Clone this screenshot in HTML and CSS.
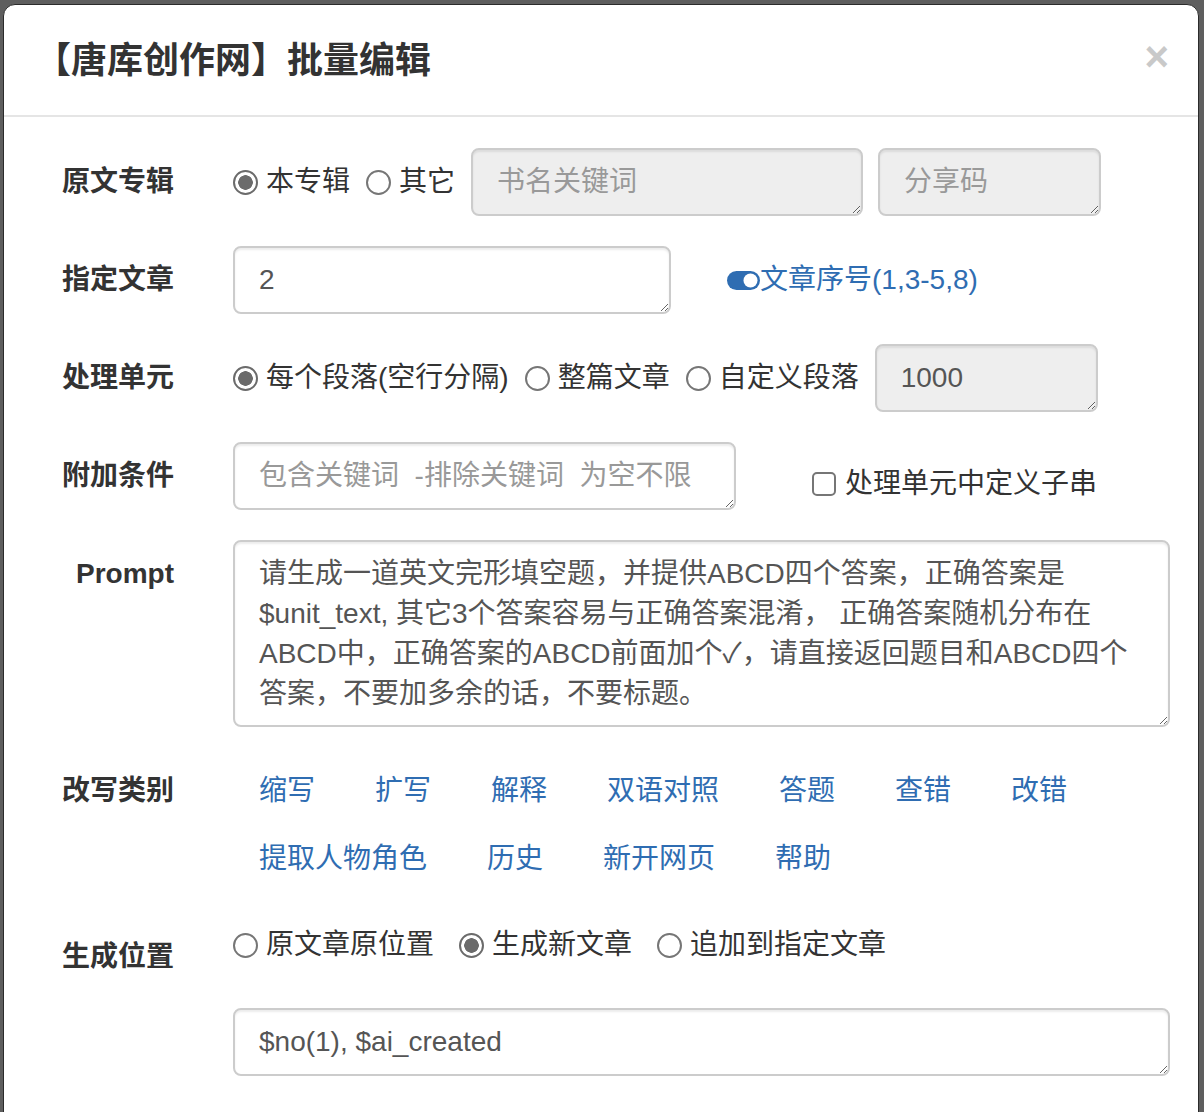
FILE: index.html
```html
<!DOCTYPE html>
<html lang="zh-CN">
<head>
    <meta charset="UTF-8">
    <title>批量编辑</title>
    <link rel="stylesheet" href="styles.css">
</head>
<body>
    <div class="modal">
        <div class="modal-header">
            <h4 class="modal-title">【唐库创作网】批量编辑</h4>
            <button class="close">×</button>
        </div>

        <div class="modal-body">
            <div class="form-row">
                <label class="row-label">原文专辑</label>
                <div class="row-controls">
                    <label class="radio"><input type="radio" name="src" checked>本专辑</label>
                    <label class="radio"><input type="radio" name="src">其它</label>
                    <textarea class="field field-grey book-field" placeholder="书名关键词" readonly></textarea>
                    <textarea class="field field-grey code-field" placeholder="分享码" readonly></textarea>
                </div>
            </div>

            <div class="form-row">
                <label class="row-label">指定文章</label>
                <div class="row-controls">
                    <textarea class="field article-field">2</textarea>
                    <a class="toggle-link" href="#">
                        <svg width="33" height="19" viewBox="0 0 33 19"><rect x="0" y="0" width="33" height="19" rx="9.5" fill="#2f6db2"/><circle cx="23.5" cy="9.5" r="7" fill="#fff"/></svg>文章序号(1,3-5,8)
                    </a>
                </div>
            </div>

            <div class="form-row">
                <label class="row-label">处理单元</label>
                <div class="row-controls">
                    <label class="radio"><input type="radio" name="unit" checked>每个段落(空行分隔)</label>
                    <label class="radio"><input type="radio" name="unit">整篇文章</label>
                    <label class="radio"><input type="radio" name="unit">自定义段落</label>
                    <textarea class="field field-grey size-field" readonly>1000</textarea>
                </div>
            </div>

            <div class="form-row">
                <label class="row-label">附加条件</label>
                <div class="row-controls">
                    <textarea class="field cond-field" placeholder="包含关键词  -排除关键词  为空不限"></textarea>
                    <label class="check"><input type="checkbox">处理单元中定义子串</label>
                </div>
            </div>

            <div class="form-row">
                <label class="row-label">Prompt</label>
                <div class="row-controls">
                    <textarea class="field prompt-field" rows="4">请生成一道英文完形填空题，并提供ABCD四个答案，正确答案是 $unit_text, 其它3个答案容易与正确答案混淆， 正确答案随机分布在ABCD中，正确答案的ABCD前面加个✓，请直接返回题目和ABCD四个答案，不要加多余的话，不要标题。</textarea>
                </div>
            </div>

            <div class="form-row">
                <label class="row-label">改写类别</label>
                <div class="row-controls link-list">
                    <a href="#" class="btn-link">缩写</a>
                    <a href="#" class="btn-link">扩写</a>
                    <a href="#" class="btn-link">解释</a>
                    <a href="#" class="btn-link">双语对照</a>
                    <a href="#" class="btn-link">答题</a>
                    <a href="#" class="btn-link">查错</a>
                    <a href="#" class="btn-link">改错</a>
                    <a href="#" class="btn-link">提取人物角色</a>
                    <a href="#" class="btn-link">历史</a>
                    <a href="#" class="btn-link">新开网页</a>
                    <a href="#" class="btn-link">帮助</a>
                </div>
            </div>

            <div class="form-row">
                <label class="row-label">生成位置</label>
                <div class="row-controls stacked">
                    <div class="radio-line">
                        <label class="radio wide"><input type="radio" name="pos">原文章原位置</label>
                        <label class="radio wide"><input type="radio" name="pos" checked>生成新文章</label>
                        <label class="radio wide"><input type="radio" name="pos">追加到指定文章</label>
                    </div>
                    <textarea class="field title-field">$no(1), $ai_created</textarea>
                </div>
            </div>
        </div>
    </div>
</body>
</html>
```

FILE: styles.css
```css
* {
    box-sizing: border-box;
}

html, body {
    margin: 0;
    height: 100%;
    overflow: hidden;
}

body {
    background: #5e5e5e;
    padding: 4px 5px 0 3px;
    font-family: "Liberation Sans", "Noto Sans CJK SC", sans-serif;
    font-size: 28px;
    line-height: 40px;
    color: #333;
}

.modal {
    background: #fff;
    border: 1px solid #2b2b2b;
    border-radius: 12px 12px 0 0;
    height: 1120px;
}

.modal-header {
    display: flex;
    justify-content: space-between;
    align-items: center;
    padding: 30px 29px 29px 31px;
    border-bottom: 2px solid #e5e5e5;
}

.modal-title {
    margin: 0;
    font-size: 36px;
    line-height: 51px;
    font-weight: 700;
    color: #333;
}

.close {
    background: none;
    border: none;
    padding: 0;
    margin-top: -8px;
    font-family: "Liberation Sans", sans-serif;
    font-size: 42px;
    line-height: 1;
    font-weight: 700;
    color: #c9c9c9;
}

.modal-body {
    padding: 31px 28px 30px 32px;
}

.form-row {
    display: grid;
    grid-template-columns: 138px 1fr;
    column-gap: 59px;
    margin-bottom: 30px;
}

.row-label {
    text-align: right;
    font-weight: 700;
    padding-top: 14px;
}

.row-controls {
    display: flex;
    align-items: center;
}

.radio, .check {
    display: inline-flex;
    align-items: center;
    margin-right: 16px;
    white-space: nowrap;
}

.radio.wide {
    margin-right: 25px;
}

.radio input {
    appearance: none;
    width: 25px;
    height: 25px;
    margin: 0 8px 0 0;
    border: 2px solid #767676;
    border-radius: 50%;
    background: #fff;
}

.radio input:checked {
    border-color: #6b6b6b;
    background: radial-gradient(circle, #6b6b6b 0 7px, #fff 7.5px);
}

.check input {
    appearance: none;
    width: 24px;
    height: 24px;
    margin: 0 9px 0 0;
    border: 2px solid #767676;
    border-radius: 5px;
    background: #fff;
}

.field {
    display: block;
    height: 68px;
    padding: 12px 24px;
    border: 2px solid #ccc;
    border-radius: 8px;
    box-shadow: inset 0 2px 2px rgba(0, 0, 0, 0.075);
    font-family: inherit;
    font-size: 28px;
    line-height: 40px;
    color: #555;
    background: #fff;
    overflow: hidden;
    resize: vertical;
}

.field::placeholder {
    color: #999;
}

.field-grey {
    background: #eee;
}

.book-field {
    width: 392px;
    margin-right: 15px;
}

.code-field {
    width: 223px;
}

.article-field {
    width: 438px;
    margin-right: 56px;
}

.size-field {
    width: 223px;
}

.cond-field {
    width: 503px;
    margin-right: 76px;
}

.check {
    align-self: flex-start;
    margin-top: 22px;
}

.prompt-field {
    width: 100%;
    height: 187px;
}

.toggle-link {
    display: inline-flex;
    align-items: center;
    color: #2f6db2;
    text-decoration: none;
}

.link-list {
    flex-wrap: wrap;
    gap: 0 8px;
}

.btn-link {
    padding: 14px 26px;
    color: #2f6db2;
    text-decoration: none;
}

.stacked {
    flex-direction: column;
    align-items: stretch;
}

.radio-line {
    display: flex;
    margin-top: 2px;
    margin-bottom: 43px;
}

.title-field {
    width: 100%;
}
```
